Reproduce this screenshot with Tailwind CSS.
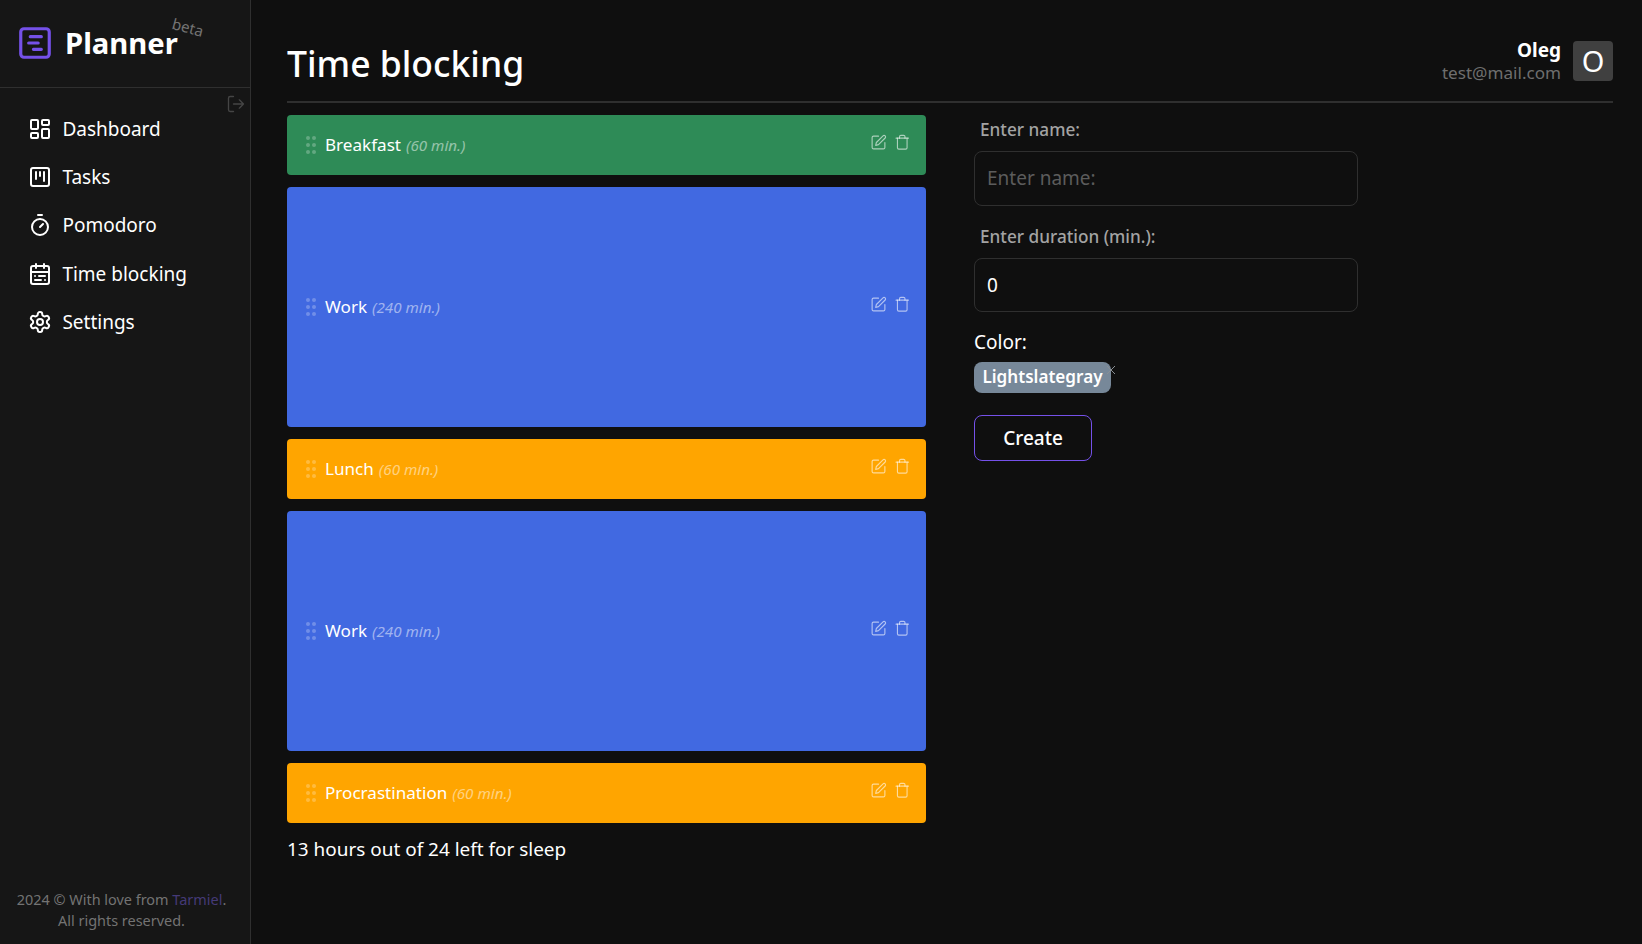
<!DOCTYPE html>
<html lang="en">
<head>
<meta charset="utf-8">
<title>Planner</title>
<script src="https://cdn.jsdelivr.net/npm/@tailwindcss/browser@4"></script>
</head>
<body class="bg-[#0f0f0f] text-white font-['Noto_Sans',sans-serif] text-[19px] leading-[26px] overflow-hidden">
<svg class="hidden">
  <defs>
    <symbol id="grip" viewBox="0 0 24 24"><g fill="currentColor"><circle cx="9" cy="12" r="2"/><circle cx="9" cy="5" r="2"/><circle cx="9" cy="19" r="2"/><circle cx="15" cy="12" r="2"/><circle cx="15" cy="5" r="2"/><circle cx="15" cy="19" r="2"/></g></symbol>
    <symbol id="edit" viewBox="0 0 24 24"><g fill="none" stroke="currentColor" stroke-width="1.6" stroke-linecap="round" stroke-linejoin="round"><path d="M12 3H5a2 2 0 0 0-2 2v14a2 2 0 0 0 2 2h14a2 2 0 0 0 2-2v-7"/><path d="M18.375 2.625a2.121 2.121 0 1 1 3 3L12 15l-4 1 1-4Z"/></g></symbol>
    <symbol id="trash" viewBox="0 0 24 24"><g fill="none" stroke="currentColor" stroke-width="1.6" stroke-linecap="round" stroke-linejoin="round"><path d="M3 6h18"/><path d="M19 6v14c0 1-1 2-2 2H7c-1 0-2-1-2-2V6"/><path d="M8 6V4c0-1 1-2 2-2h4c1 0 2 1 2 2v2"/></g></symbol>
  </defs>
</svg>
<div class="flex h-[944px]">
  <aside class="w-[251px] shrink-0 bg-[#161616] border-r border-[#2f2f2f] flex flex-col justify-between">
    <div>
      <div class="relative h-[88px] border-b border-[#2f2f2f] flex items-center gap-[11px] pl-4 pb-[2px]">
        <svg class="size-[38px] text-[#7551e9]" viewBox="0 0 24 24" fill="none" stroke="currentColor" stroke-width="2" stroke-linecap="round" stroke-linejoin="round"><rect x="3" y="3" width="18" height="18" rx="2"/><path d="M9 8h7M8 12h6M11 16h5"/></svg>
        <span class="text-[29.2px] font-bold">Planner</span>
        <span class="absolute left-[171.5px] top-[14px] text-[15.2px] text-[#737373] rotate-[15deg]">beta</span>
      </div>
      <div class="relative">
        <svg class="absolute right-[4px] top-[6px] size-5 text-[#454545]" viewBox="0 0 24 24" fill="none" stroke="currentColor" stroke-width="1.6" stroke-linecap="round" stroke-linejoin="round"><path d="M9 21H5a2 2 0 0 1-2-2V5a2 2 0 0 1 2-2h4M16 17l5-5-5-5M21 12H9"/></svg>
        <nav class="flex flex-col gap-[22.2px] pt-7 pl-7">
          <a class="flex items-center gap-[10.4px]"><svg class="size-6" viewBox="0 0 24 24" fill="none" stroke="currentColor" stroke-width="2" stroke-linecap="round" stroke-linejoin="round"><rect width="7" height="9" x="3" y="3" rx="1"/><rect width="7" height="5" x="14" y="3" rx="1"/><rect width="7" height="9" x="14" y="12" rx="1"/><rect width="7" height="5" x="3" y="16" rx="1"/></svg>Dashboard</a>
          <a class="flex items-center gap-[10.4px]"><svg class="size-6" viewBox="0 0 24 24" fill="none" stroke="currentColor" stroke-width="2" stroke-linecap="round" stroke-linejoin="round"><rect x="3" y="3" width="18" height="18" rx="2"/><path d="M8 7v7M12 7v4M16 7v9"/></svg>Tasks</a>
          <a class="flex items-center gap-[10.4px]"><svg class="size-6" viewBox="0 0 24 24" fill="none" stroke="currentColor" stroke-width="2" stroke-linecap="round" stroke-linejoin="round"><path d="M10 2h4M12 14l3-3"/><circle cx="12" cy="14" r="8"/></svg>Pomodoro</a>
          <a class="flex items-center gap-[10.4px]"><svg class="size-6" viewBox="0 0 24 24" fill="none" stroke="currentColor" stroke-width="2" stroke-linecap="round" stroke-linejoin="round"><rect x="3" y="4" width="18" height="18" rx="2"/><path d="M16 2v4M3 10h18M8 2v4M17 14h-6M13 18H7M7 14h.01M17 18h.01"/></svg>Time blocking</a>
          <a class="flex items-center gap-[10.4px]"><svg class="size-6" viewBox="0 0 24 24" fill="none" stroke="currentColor" stroke-width="2" stroke-linecap="round" stroke-linejoin="round"><path d="M12.22 2h-.44a2 2 0 0 0-2 2v.18a2 2 0 0 1-1 1.73l-.43.25a2 2 0 0 1-2 0l-.15-.08a2 2 0 0 0-2.73.73l-.22.38a2 2 0 0 0 .73 2.73l.15.1a2 2 0 0 1 1 1.72v.51a2 2 0 0 1-1 1.74l-.15.09a2 2 0 0 0-.73 2.73l.22.38a2 2 0 0 0 2.73.73l.15-.08a2 2 0 0 1 2 0l.43.25a2 2 0 0 1 1 1.73V20a2 2 0 0 0 2 2h.44a2 2 0 0 0 2-2v-.18a2 2 0 0 1 1-1.73l.43-.25a2 2 0 0 1 2 0l.15.08a2 2 0 0 0 2.73-.73l.22-.39a2 2 0 0 0-.73-2.73l-.15-.08a2 2 0 0 1-1-1.74v-.5a2 2 0 0 1 1-1.74l.15-.09a2 2 0 0 0 .73-2.73l-.22-.38a2 2 0 0 0-2.73-.73l-.15.08a2 2 0 0 1-2 0l-.43-.25a2 2 0 0 1-1-1.73V4a2 2 0 0 0-2-2z"/><circle cx="12" cy="12" r="3"/></svg>Settings</a>
        </nav>
      </div>
    </div>
    <footer class="pb-[13px] pr-[7px] text-center text-[14.45px] leading-[21px] text-[#737373]">2024 © With love from <a class="text-[#453a78]">Tarmiel</a>.<br>All rights reserved.</footer>
  </aside>
  <main class="grow pl-9 pr-[29px]">
    <header class="h-[103px] border-b-2 border-[#2f2f2f] flex justify-between">
      <h1 class="pt-[38px] text-[35.5px] leading-[50px] font-medium">Time blocking</h1>
      <div class="flex gap-3 pt-[39px]">
        <div class="text-right"><div class="font-bold leading-[23px]">Oleg</div><div class="text-[17.1px] leading-[22px] text-[#6e6e6e]">test@mail.com</div></div>
        <div class="mt-[2px] size-10 rounded bg-[#404040] flex items-center justify-center text-[29px]">O</div>
      </div>
    </header>
    <div class="flex gap-12 pt-3">
      <section class="w-[639px] shrink-0">
        <div class="flex flex-col gap-3">
          <div class="h-[60px] rounded bg-[#2e8b57] flex items-center pl-3 pr-4 text-[17.1px]"><svg class="size-6 text-white/25"><use href="#grip"/></svg><span class="ml-[2px]">Breakfast</span><i class="ml-[5px] text-[15.2px] text-white/50">(60 min.)</i><div class="ml-auto mb-[5px] flex gap-[7px] text-white/60"><svg class="size-[17px]"><use href="#edit"/></svg><svg class="size-[16.5px]"><use href="#trash"/></svg></div></div>
          <div class="h-[240px] rounded bg-[#4169e1] flex items-center pl-3 pr-4 text-[17.1px]"><svg class="size-6 text-white/25"><use href="#grip"/></svg><span class="ml-[2px]">Work</span><i class="ml-[5px] text-[15.2px] text-white/50">(240 min.)</i><div class="ml-auto mb-[5px] flex gap-[7px] text-white/60"><svg class="size-[17px]"><use href="#edit"/></svg><svg class="size-[16.5px]"><use href="#trash"/></svg></div></div>
          <div class="h-[60px] rounded bg-[#ffa500] flex items-center pl-3 pr-4 text-[17.1px]"><svg class="size-6 text-white/25"><use href="#grip"/></svg><span class="ml-[2px]">Lunch</span><i class="ml-[5px] text-[15.2px] text-white/50">(60 min.)</i><div class="ml-auto mb-[5px] flex gap-[7px] text-white/60"><svg class="size-[17px]"><use href="#edit"/></svg><svg class="size-[16.5px]"><use href="#trash"/></svg></div></div>
          <div class="h-[240px] rounded bg-[#4169e1] flex items-center pl-3 pr-4 text-[17.1px]"><svg class="size-6 text-white/25"><use href="#grip"/></svg><span class="ml-[2px]">Work</span><i class="ml-[5px] text-[15.2px] text-white/50">(240 min.)</i><div class="ml-auto mb-[5px] flex gap-[7px] text-white/60"><svg class="size-[17px]"><use href="#edit"/></svg><svg class="size-[16.5px]"><use href="#trash"/></svg></div></div>
          <div class="h-[60px] rounded bg-[#ffa500] flex items-center pl-3 pr-4 text-[17.1px]"><svg class="size-6 text-white/25"><use href="#grip"/></svg><span class="ml-[2px]">Procrastination</span><i class="ml-[5px] text-[15.2px] text-white/50">(60 min.)</i><div class="ml-auto mb-[5px] flex gap-[7px] text-white/60"><svg class="size-[17px]"><use href="#edit"/></svg><svg class="size-[16.5px]"><use href="#trash"/></svg></div></div>
        </div>
        <div class="mt-[13px] text-[18.95px]">13 hours out of 24 left for sleep</div>
      </section>
      <form class="w-[384px]">
        <label class="block pt-[2px] pl-[6px] text-[17.2px] font-medium text-[#a3a3a3]">Enter name:</label>
        <input class="mt-2 block w-full h-[55px] rounded-lg border border-[#2f2f2f] px-3 pb-[2px] text-[19px] placeholder:text-[#5c5c5c]" placeholder="Enter name:">
        <label class="mt-[18px] block pl-[6px] text-[17.2px] font-medium text-[#a3a3a3]">Enter duration (min.):</label>
        <input class="mt-2 block w-full h-[54px] rounded-lg border border-[#2f2f2f] px-3 text-[19px]" value="0">
        <div class="mt-[17px]">Color:</div>
        <div class="relative mt-[7px] h-[31px] w-[137px] rounded-lg bg-[#778899] flex items-center justify-center pb-px text-[17.1px] font-semibold">Lightslategray
          <svg class="absolute -right-[4px] top-[4px] size-2 overflow-visible text-[#8a8f94]" viewBox="0 0 8 8" stroke="currentColor"><path d="M0 0l8 8M8 0L0 8"/></svg>
        </div>
        <button type="button" class="mt-[22px] h-[46px] w-[118px] rounded-lg border border-[#7551e9] font-medium">Create</button>
      </form>
    </div>
  </main>
</div>
</body>
</html>
